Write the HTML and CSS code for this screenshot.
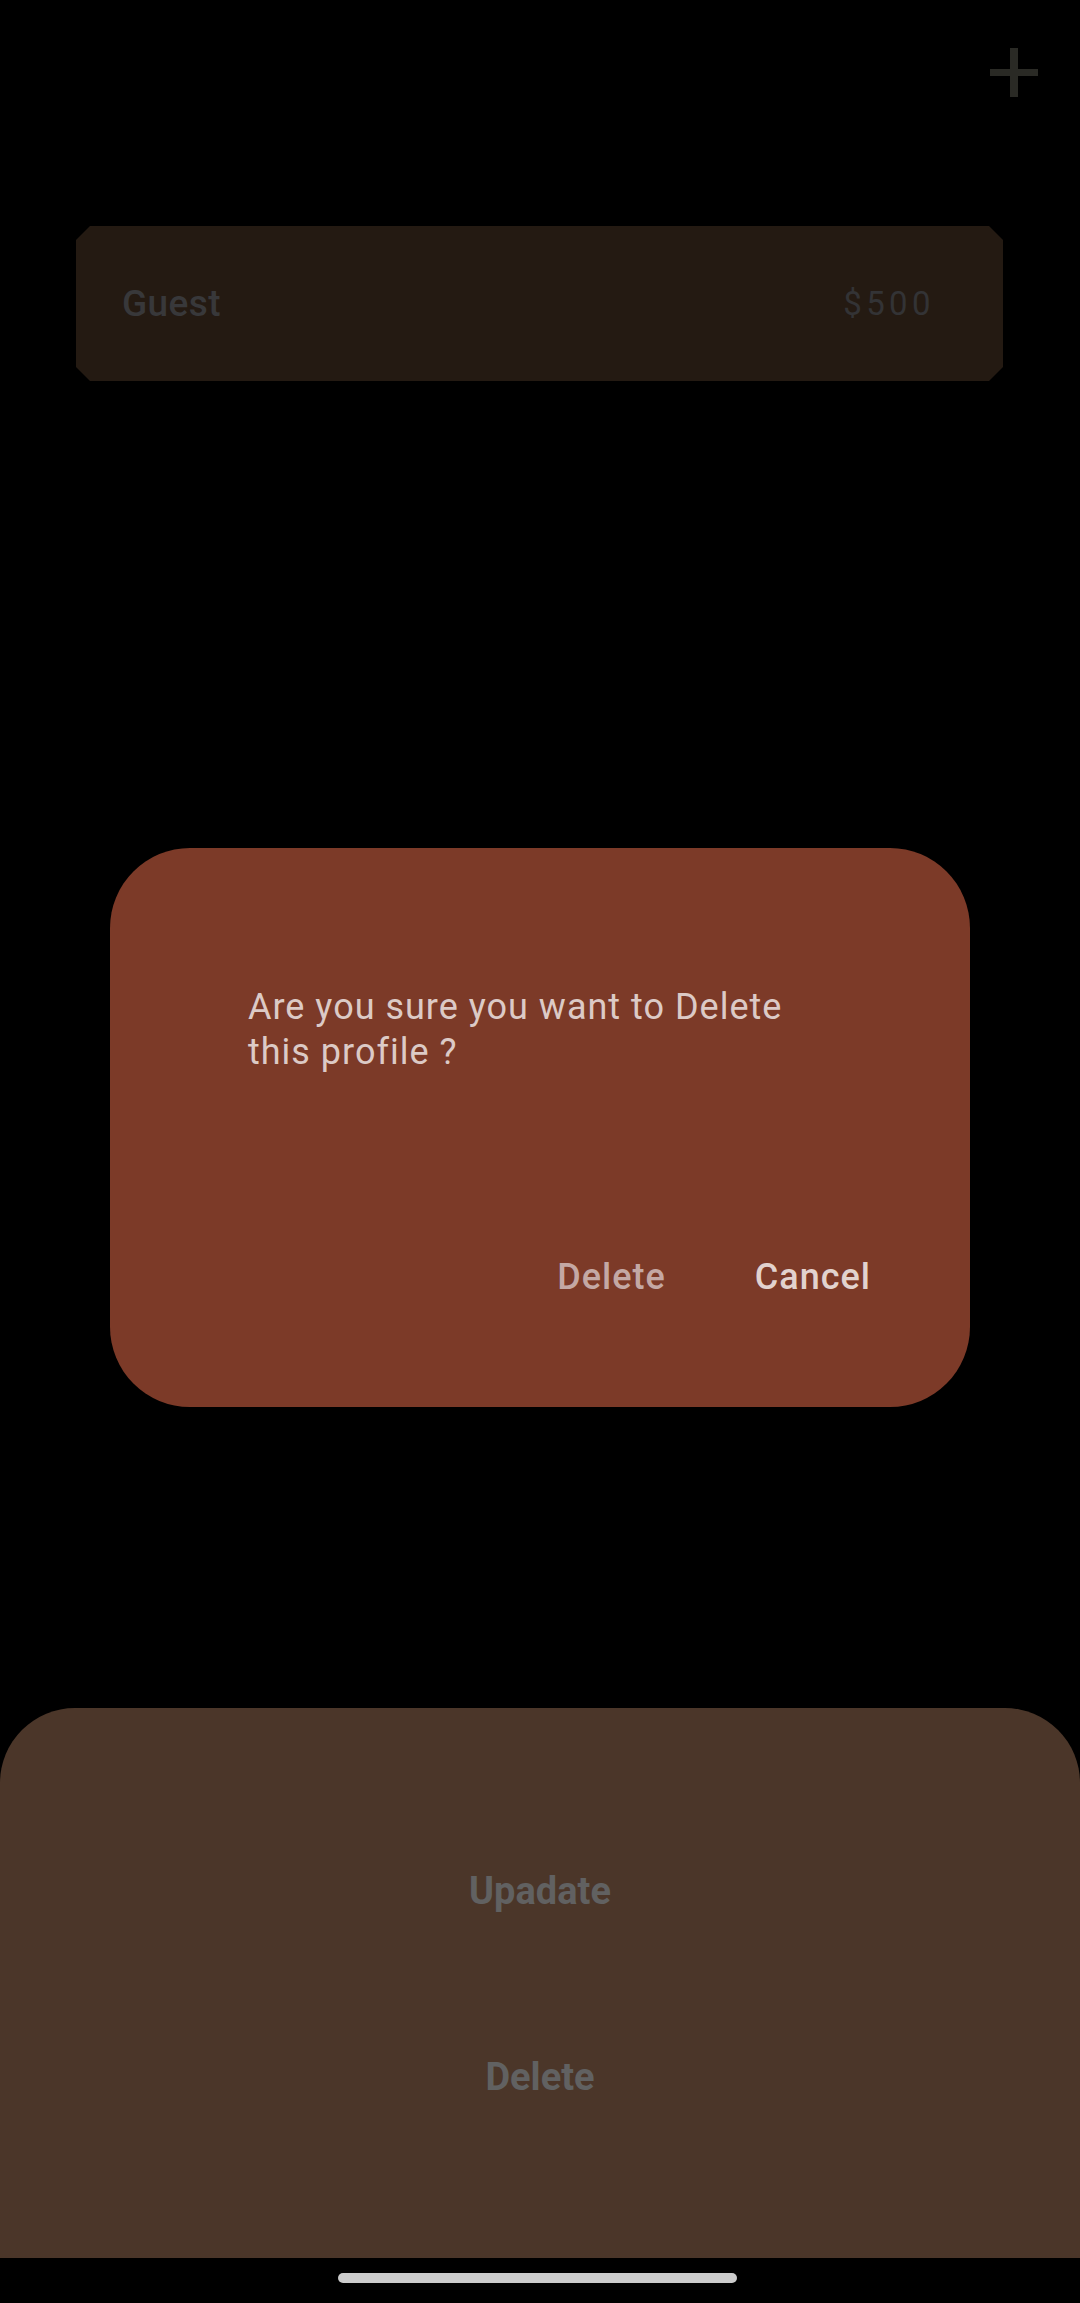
FILE: index.html
```html
<!DOCTYPE html>
<html>
<head>
<meta charset="utf-8">
<link rel="stylesheet" href="styles.css">
</head>
<body>
<div class="screen">
  <header class="appbar">
    <svg class="plus" width="48" height="49" viewBox="0 0 48 49">
      <rect x="20" y="0" width="8" height="49" fill="#2a2a25"/>
      <rect x="0" y="21" width="48" height="7" fill="#2a2a25"/>
    </svg>
  </header>
  <div class="card">
    <span class="card-name">Guest</span>
    <span class="card-amount">$500</span>
  </div>
  <div class="sheet">
    <div class="sheet-item sheet-update">Upadate</div>
    <div class="sheet-item sheet-delete">Delete</div>
  </div>
  <div class="navbar"><div class="pill"></div></div>

  <div class="dialog">
    <p class="dialog-text">Are you sure you want to Delete this profile ?</p>
    <div class="dialog-actions">
      <span class="btn btn-delete">Delete</span>
      <span class="btn btn-cancel">Cancel</span>
    </div>
  </div>
</div>
</body>
</html>
```
FILE: styles.css
```css
html, body {
  margin: 0;
  padding: 0;
  background: #000;
}
body {
  font-family: Roboto, "Liberation Sans", sans-serif;
}
.screen {
  position: relative;
  width: 1080px;
  height: 2303px;
  display: flex;
  flex-direction: column;
  background: #000;
  overflow: hidden;
}
.appbar {
  height: 226px;
  display: flex;
  justify-content: flex-end;
  align-items: flex-start;
  padding: 48px 42px 0 0;
  box-sizing: border-box;
}
.card {
  margin: 0 77px 0 76px;
  height: 155px;
  background: #241a12;
  clip-path: polygon(14px 0, calc(100% - 14px) 0, 100% 14px, 100% calc(100% - 14px), calc(100% - 14px) 100%, 14px 100%, 0 calc(100% - 14px), 0 14px);
  display: flex;
  align-items: center;
  justify-content: space-between;
  padding: 0 68px 0 46px;
  box-sizing: border-box;
}
.card-name {
  font-size: 37px;
  font-weight: 500;
  letter-spacing: 0.4px;
  color: #38383a;
}
.card-amount {
  font-size: 33px;
  letter-spacing: 4.4px;
  color: #333335;
}
.sheet {
  margin-top: auto;
  height: 550px;
  background: #4b3629;
  border-radius: 75px 75px 0 0;
  display: flex;
  flex-direction: column;
  align-items: center;
  padding-top: 160px;
  box-sizing: border-box;
}
.sheet-item {
  font-size: 38px;
  font-weight: 700;
  color: #616161;
  line-height: 46px;
}
.sheet-delete {
  margin-top: 140px;
}
.navbar {
  height: 45px;
  display: flex;
  justify-content: center;
  align-items: flex-start;
  padding: 15px 6px 0 0;
  box-sizing: border-box;
}
.pill {
  width: 399px;
  height: 10px;
  border-radius: 5px;
  background: #cccccc;
}
.dialog {
  position: absolute;
  left: 110px;
  top: 848px;
  width: 860px;
  height: 559px;
  background: #7c3a28;
  border-radius: 80px;
  box-sizing: border-box;
  padding: 137px 100px 0 138px;
  display: flex;
  flex-direction: column;
}
.dialog-text {
  margin: 0;
  width: 575px;
  font-size: 36px;
  line-height: 45px;
  letter-spacing: 1px;
  color: #dccac6;
}
.dialog-actions {
  display: flex;
  justify-content: flex-end;
  gap: 89px;
  margin-top: 180px;
}
.btn {
  font-size: 36px;
  font-weight: 500;
  line-height: 44px;
  letter-spacing: 1px;
}
.btn-delete {
  color: #c4a8a4;
}
.btn-cancel {
  color: #e2d2ce;
  margin-right: -1px;
}
```
